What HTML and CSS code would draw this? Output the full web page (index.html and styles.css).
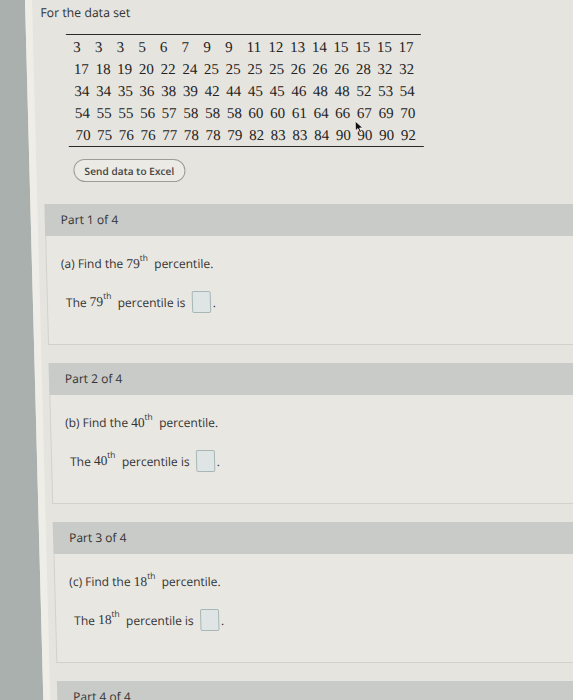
FILE: index.html
```html
<!DOCTYPE html>
<html>
<head>
    <meta charset="utf-8" />
    <title>Percentiles</title>
    <link rel="stylesheet" href="styles.css">
</head>
<body>
    <div class="page">
        <div class="intro">For the data set</div>

        <div class="data-wrap">
            <div class="data-table">
                <span>3</span><span>3</span><span>3</span><span>5</span><span>6</span><span>7</span><span>9</span><span>9</span><span>11</span><span>12</span><span>13</span><span>14</span><span>15</span><span>15</span><span>15</span><span>17</span>
                <span>17</span><span>18</span><span>19</span><span>20</span><span>22</span><span>24</span><span>25</span><span>25</span><span>25</span><span>25</span><span>26</span><span>26</span><span>26</span><span>28</span><span>32</span><span>32</span>
                <span>34</span><span>34</span><span>35</span><span>36</span><span>38</span><span>39</span><span>42</span><span>44</span><span>45</span><span>45</span><span>46</span><span>48</span><span>48</span><span>52</span><span>53</span><span>54</span>
                <span>54</span><span>55</span><span>55</span><span>56</span><span>57</span><span>58</span><span>58</span><span>58</span><span>60</span><span>60</span><span>61</span><span>64</span><span>66</span><span>67</span><span>69</span><span>70</span>
                <span>70</span><span>75</span><span>76</span><span>76</span><span>77</span><span>78</span><span>78</span><span>79</span><span>82</span><span>83</span><span>83</span><span>84</span><span>90</span><span>90</span><span>90</span><span>92</span>
            </div>
            <!-- mouse pointer sitting over the data -->
            <svg class="pointer" width="10" height="14" viewBox="0 0 10 14">
                <path d="M1 1 L1 11 L3.5 8.6 L5.3 12.8 L7 12 L5.3 8 L8.6 8 Z" fill="#111" stroke="#fff" stroke-width="0.8"/>
            </svg>
        </div>

        <button class="excel-btn">Send data to Excel</button>

        <div class="part">
            <div class="part-head">Part 1 of 4</div>
            <div class="part-body">
                <div class="question">(a) Find the <span class="num">79</span><sup>th</sup> percentile.</div>
                <div class="answer">The <span class="num">79</span><sup>th</sup> percentile is <span class="answer-box"></span>.</div>
            </div>
        </div>

        <div class="part">
            <div class="part-head">Part 2 of 4</div>
            <div class="part-body">
                <div class="question">(b) Find the <span class="num">40</span><sup>th</sup> percentile.</div>
                <div class="answer">The <span class="num">40</span><sup>th</sup> percentile is <span class="answer-box"></span>.</div>
            </div>
        </div>

        <div class="part">
            <div class="part-head">Part 3 of 4</div>
            <div class="part-body">
                <div class="question">(c) Find the <span class="num">18</span><sup>th</sup> percentile.</div>
                <div class="answer">The <span class="num">18</span><sup>th</sup> percentile is <span class="answer-box"></span>.</div>
            </div>
        </div>

        <div class="part">
            <div class="part-head">Part 4 of 4</div>
            <div class="part-body"></div>
        </div>
    </div>
</body>
</html>
```

FILE: styles.css
```css
html, body {
    margin: 0;
    padding: 0;
    height: 100%;
    overflow: hidden;
}
body {
    background-color: #a9b0ad; /* grey strip on the left */
    font-family: 'Open Sans', 'Liberation Sans', sans-serif;
    font-size: 12px;
    color: #333;
}
.page {
    margin-left: 25px;
    min-height: 760px;
    background-color: #e6e4de;
    border-left: 7px solid #eeede8;
    padding: 5px 0 0 8px;
    transform: skewX(1.5deg); /* the photo leans a bit */
    transform-origin: 0 0;
}
.intro {
    line-height: 16px;
    font-size: 12.3px;
}

/* data set */
.data-wrap {
    position: relative;
    display: inline-block;
    margin: 13px 0 0 25px;
}
.data-table {
    display: grid;
    grid-template-columns: repeat(15, 21.7px) 16px;
    padding: 1px 7px 0 7px;
    border-top: 1px solid #2a2a2a;
    border-bottom: 1px solid #2a2a2a;
    font-family: 'Liberation Serif', 'Times New Roman', serif;
    font-size: 15px;
    line-height: 22px;
    color: #222;
}
.pointer {
    position: absolute;
    left: 286px;
    top: 86px;
}

.excel-btn {
    display: block;
    margin: 12px 0 0 29px;
    height: 23px;
    padding: 0 10px;
    border: 1px solid #9c9c98;
    border-radius: 12px;
    background-color: #ebeae5;
    font-family: 'Open Sans', 'Liberation Sans', sans-serif;
    font-size: 10.2px;
    font-weight: 600;
    color: #444;
}

/* parts */
.part {
    margin: 0 0 18px -1px;
}
.excel-btn + .part {
    margin-top: 22px;
}
.part-head {
    height: 32px;
    line-height: 32px;
    padding-left: 16px;
    background-color: #c8cbc7;
}
.part-body {
    height: 109px;
    box-sizing: border-box;
    padding: 20px 0 0 14px;
    background-color: #e9e7e2;
    border: 1px solid #d2d1cb;
    border-top: none;
}
.question {
    line-height: 16px;
}
.answer {
    margin-top: 18px;
    padding-left: 4px;
    height: 22px;
    display: flex;
    align-items: center;
    white-space: pre;
}
.num {
    font-family: 'Liberation Serif', 'Times New Roman', serif;
    font-size: 13.5px;
}
sup {
    font-size: 8.5px;
    vertical-align: 0;
    position: relative;
    top: -7px;
    margin-right: 3px;
}
.answer sup {
    align-self: flex-start;
    top: -1px;
}
.answer-box {
    display: inline-block;
    width: 17px;
    height: 20px;
    border: 1px solid #a7b6b6;
    border-radius: 2px;
    background-color: #dfe5e4;
    margin: 0 2px 0 3px;
}
```
